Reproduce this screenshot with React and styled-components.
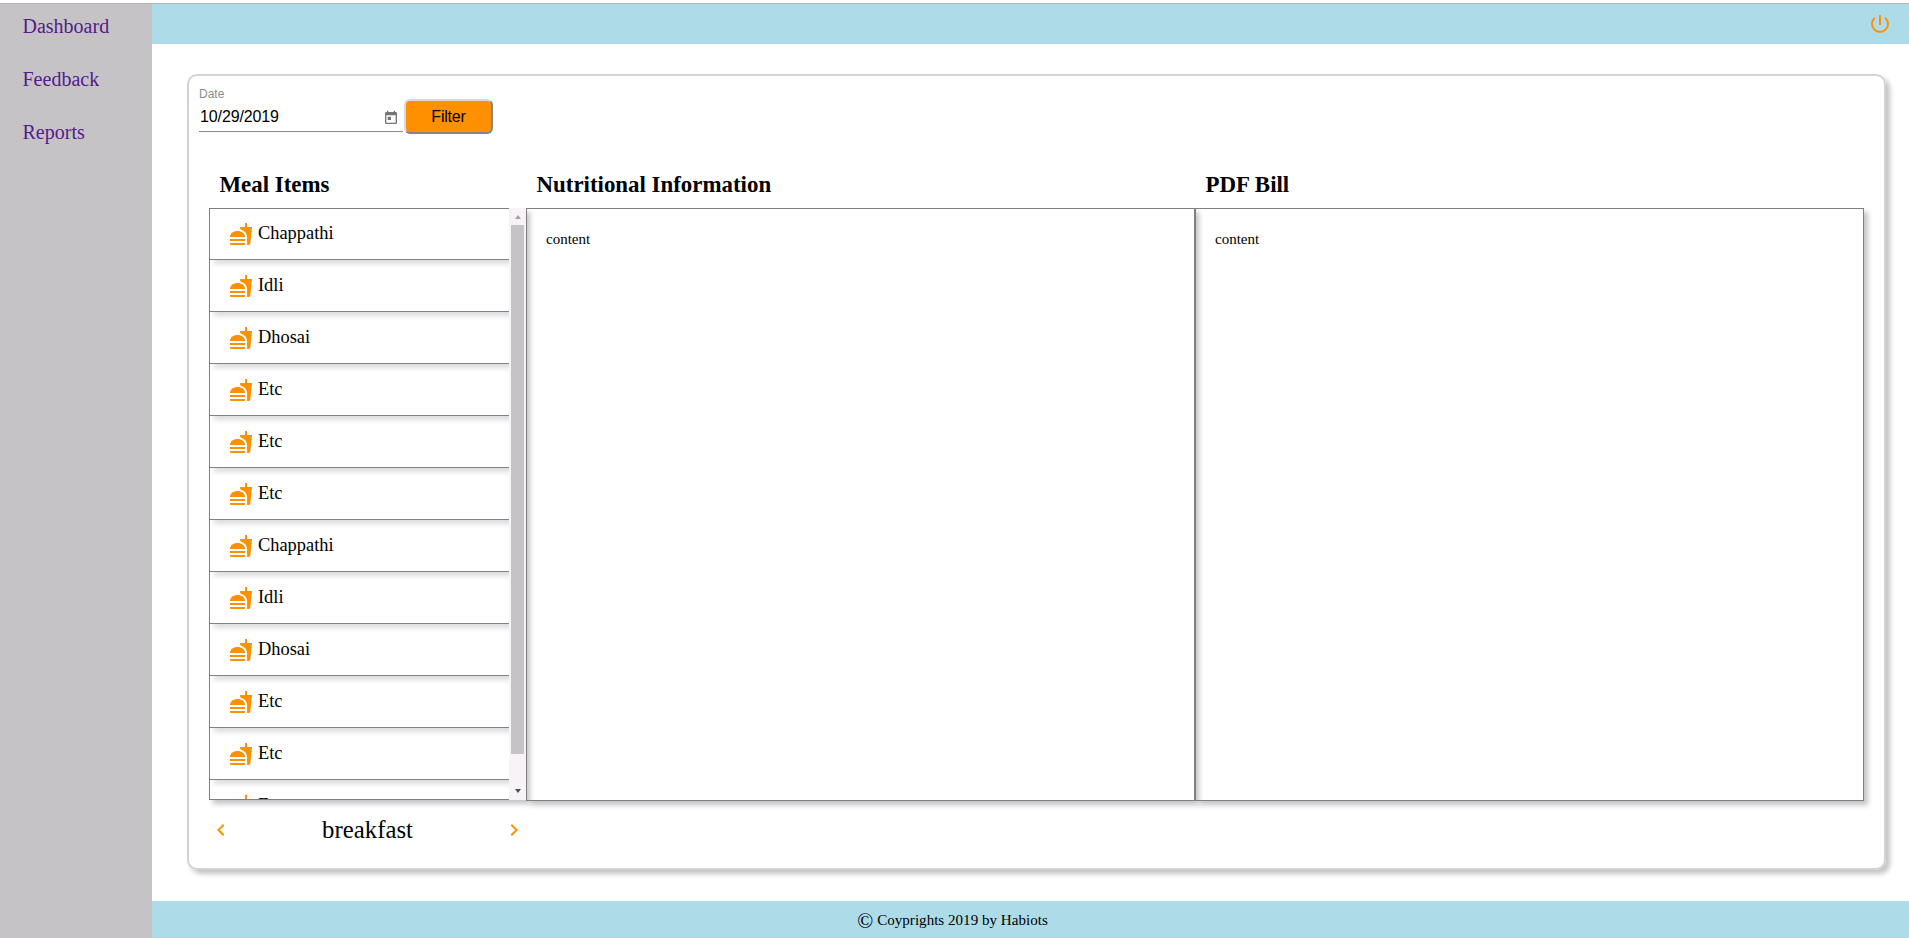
import React from "react";
import styled, { createGlobalStyle } from "styled-components";
import {
  MdChevronLeft,
  MdChevronRight,
  MdFastfood,
  MdPowerSettingsNew,
  MdToday,
} from "react-icons/md";

const GlobalStyle = createGlobalStyle`
  * { box-sizing: border-box; }
  body {
    margin: 0;
    background: #fff;
    color: #000;
    font-family: "Liberation Serif", "Times New Roman", serif;
    overflow: hidden;
  }
  svg { display: block; flex: none; }
`;

const Page = styled.div`
  display: flex;
  height: 935px;
  margin-top: 3px;
  border-top: 1px solid #b4b4b6;
`;

const Sidebar = styled.nav`
  width: 152px;
  background: #c5c3c6;
  display: flex;
  flex-direction: column;
  align-items: flex-start;
  gap: 30px;
  padding: 11px 0 0 22.5px;
`;

const NavLink = styled.a`
  color: #551a8b;
  font-size: 20px;
  line-height: 23px;
  text-decoration: none;
`;

const Main = styled.main`
  flex: 1;
  display: flex;
  flex-direction: column;
`;

const Header = styled.header`
  height: 40px;
  background: #addce8;
  display: flex;
  justify-content: flex-end;
  padding: 8px 17px 0 0;
  color: #ff9000;
`;

const Card = styled.section`
  height: 796px;
  margin: 30px 23px 31px 35px;
  border: 2px solid #d3d3d3;
  border-radius: 10px;
  box-shadow: 4px 4px 5px #c5c3c6;
  padding: 9px 20px 0;
`;

const Toolbar = styled.div`
  display: flex;
  margin-left: -10px;
  font-family: "Liberation Sans", Arial, sans-serif;
`;

const DateField = styled.div`
  width: 204px;
  height: 47px;
  border-bottom: 1px solid #8b8b8b;
`;

const DateLabel = styled.label`
  display: block;
  color: #8d8d8d;
  font-size: 12px;
  line-height: 16px;
  padding-top: 1px;
`;

const DateValue = styled.div`
  display: flex;
  justify-content: space-between;
  padding: 5px 4px 0 1px;
  font-size: 16px;
  line-height: 20px;
  letter-spacing: -0.12px;
  svg { color: #757575; margin-top: 3px; }
`;

const FilterButton = styled.button`
  width: 89px;
  height: 35px;
  margin: 14px 0 0 1px;
  padding: 1px 0 0;
  background: #ff9000;
  border: 2px solid;
  border-color: #d9d9dc #858589 #858589 #d9d9dc;
  border-radius: 6px;
  font: 16px "Liberation Sans", Arial, sans-serif;
  letter-spacing: -0.2px;
  color: #000;
`;

const Columns = styled.div`
  display: grid;
  grid-template-columns: 317px 669px 669px;
  margin-top: 37px;
`;

const Title = styled.h2`
  margin: 0;
  height: 37px;
  padding: 1px 0 0 10.5px;
  font-size: 22.9px;
  line-height: 26px;
`;

const MealBox = styled.div`
  display: flex;
  height: 592px;
  box-shadow: 4px 4px 5px #c5c3c6;
`;

const MealList = styled.ul`
  flex: 1;
  margin: 0;
  padding: 0;
  list-style: none;
  overflow: hidden;
  border: solid #808080;
  border-width: 1px 0 1px 1px;
`;

const MealRow = styled.li`
  display: flex;
  height: 52px;
  padding: 14px 0 0 19px;
  border-bottom: 1px solid #808080;
  box-shadow: 4px 4px 5px #dddbde;
  font-size: 18.4px;
  line-height: 22px;
  svg { color: #ff9000; }
  &:first-child { height: 51px; padding-top: 13px; }
`;

const MealName = styled.span`
  margin-left: 5px;
`;

const ScrollTrack = styled.div`
  width: 17px;
  background: #f7f3f7;
  display: flex;
  flex-direction: column;
  align-items: center;
  justify-content: space-between;
  padding: 7px 0;
`;

const ScrollThumb = styled.div`
  width: 13px;
  height: 529px;
  margin: 6px 0 auto;
  background: #c5c3c6;
`;

const Arrow = styled.div`
  border: solid transparent;
  border-width: 0 3.5px 4px;
  border-bottom-color: #a3a3a3;
  ${(p) => p.$down && "border-width: 4px 3.5px 0; border-top-color: #505050;"}
`;

const Panel = styled.div`
  height: 593px;
  padding: 21px 19px;
  border: 1px solid #808080;
  box-shadow: 4px 4px 5px #c5c3c6;
  font-size: 15px;
  line-height: 18px;
`;

const Pager = styled.div`
  display: flex;
  justify-content: space-between;
  align-items: center;
  height: 30px;
  margin-top: 15px;
  color: #ff9000;
`;

const MealTime = styled.span`
  color: #000;
  font-size: 24.8px;
`;

const Footer = styled.footer`
  flex: 1;
  background: #addce8;
  display: flex;
  justify-content: center;
  align-items: center;
  padding: 2px 156px 0 0;
  font-size: 15.1px;
`;

const Copyright = styled.span`
  font-size: 21px;
  line-height: 20px;
  margin-right: 4px;
`;

const meals = [
  "Chappathi", "Idli", "Dhosai", "Etc", "Etc", "Etc",
  "Chappathi", "Idli", "Dhosai", "Etc", "Etc", "Etc",
];

export default function App() {
  return (
    <>
      <GlobalStyle />
      <Page>
        <Sidebar>
          <NavLink>Dashboard</NavLink>
          <NavLink>Feedback</NavLink>
          <NavLink>Reports</NavLink>
        </Sidebar>
        <Main>
          <Header><MdPowerSettingsNew size={24} /></Header>
          <Card>
            <Toolbar>
              <DateField>
                <DateLabel>Date</DateLabel>
                <DateValue>10/29/2019<MdToday size={16} /></DateValue>
              </DateField>
              <FilterButton>Filter</FilterButton>
            </Toolbar>
            <Columns>
              <div>
                <Title>Meal Items</Title>
                <MealBox>
                  <MealList>
                    {meals.map((meal, i) => (
                      <MealRow key={i}>
                        <MdFastfood size={24} />
                        <MealName>{meal}</MealName>
                      </MealRow>
                    ))}
                  </MealList>
                  <ScrollTrack>
                    <Arrow />
                    <ScrollThumb />
                    <Arrow $down />
                  </ScrollTrack>
                </MealBox>
                <Pager>
                  <MdChevronLeft size={24} />
                  <MealTime>breakfast</MealTime>
                  <MdChevronRight size={24} />
                </Pager>
              </div>
              <div>
                <Title>Nutritional Information</Title>
                <Panel>content</Panel>
              </div>
              <div>
                <Title>PDF Bill</Title>
                <Panel>content</Panel>
              </div>
            </Columns>
          </Card>
          <Footer><Copyright>©</Copyright>Coyprights 2019 by Habiots</Footer>
        </Main>
      </Page>
    </>
  );
}
